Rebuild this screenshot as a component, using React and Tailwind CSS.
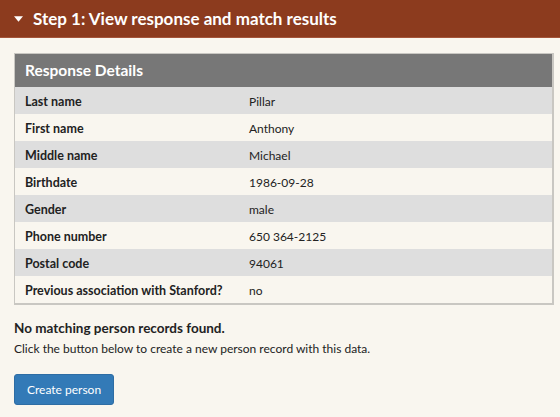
import React from 'react';

const rows = [
  ['Last name', 'Pillar'],
  ['First name', 'Anthony'],
  ['Middle name', 'Michael'],
  ['Birthdate', '1986-09-28'],
  ['Gender', 'male'],
  ['Phone number', '650 364-2125'],
  ['Postal code', '94061'],
  ['Previous association with Stanford?', 'no'],
];

const App = () => {
  return (
    <div className="min-h-[417px] bg-[#f9f6ef] text-[#222] font-['Lato','Liberation_Sans',sans-serif]">
      {/* Step header */}
      <div className="h-[38px] bg-[#8c3b1e] border-b border-[#a4553a] flex items-center px-[14px] text-white">
        <svg className="w-[9px] h-[6px] mr-[10px]" viewBox="0 0 10 6" fill="currentColor">
          <path d="M0 0h10L5 6z" />
        </svg>
        <span className="text-[17px] font-bold">Step 1: View response and match results</span>
      </div>

      <div className="px-[14px] pt-[15px]">
        {/* Response details table */}
        <div className="w-[540px] border border-[#c9c7c2] border-r-2 border-b-2">
          <div className="h-[33px] bg-[#777777] flex items-center px-[10px] text-white text-[15.5px] font-bold">
            Response Details
          </div>
          {rows.map(([label, value], i) => (
            <div
              key={label}
              className={`h-[27px] flex items-center ${i % 2 === 0 ? 'bg-[#dedede]' : 'bg-[#f9f6ef]'}`}
            >
              <div className="flex items-baseline pt-[3px]">
                <div className="w-[234px] pl-[10px] font-bold text-[12.5px]">{label}</div>
                <div className="text-[12px]">{value}</div>
              </div>
            </div>
          ))}
        </div>

        <h3 className="mt-[13px] text-[13.5px] font-bold">No matching person records found.</h3>
        <p className="mt-[2px] text-[12px]">Click the button below to create a new person record with this data.</p>

        <button className="mt-[16px] h-[31px] px-[12px] bg-[#337ab7] border border-[#2e6da4] rounded-[3px] text-white text-[12px]">
          Create person
        </button>
      </div>
    </div>
  );
};

export default App;
